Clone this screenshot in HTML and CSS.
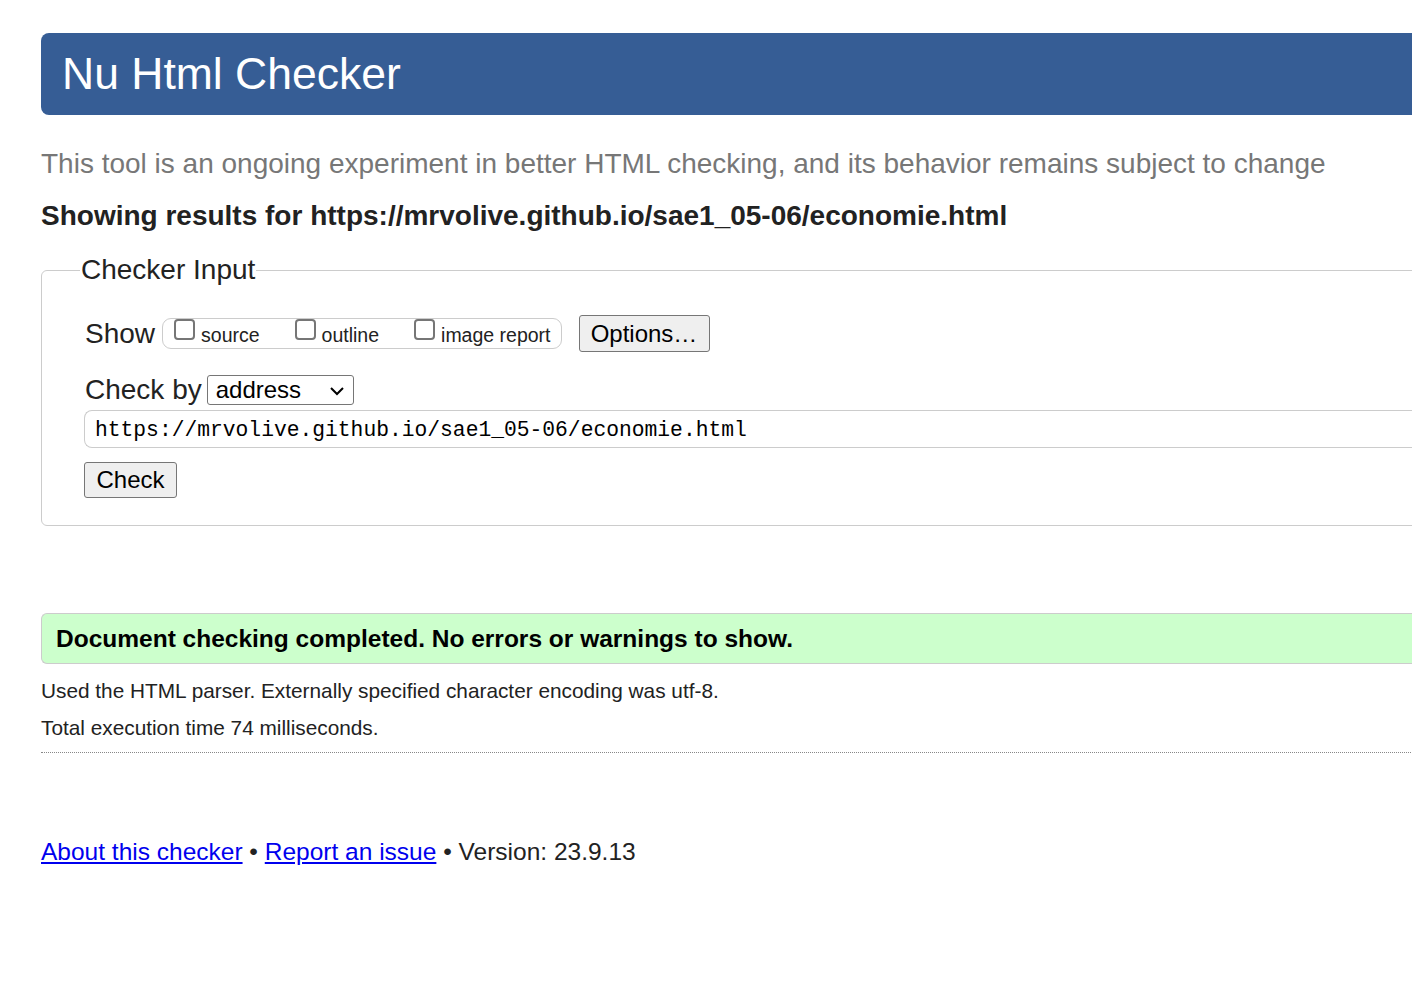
FILE: index.html
```html
<!DOCTYPE html>
<html lang="en">
<head>
<meta charset="utf-8">
<title>Nu Html Checker</title>
<link rel="stylesheet" href="styles.css">
</head>
<body>
<div class="page">
  <h1 class="banner">Nu Html Checker</h1>
  <p class="tagline">This tool is an ongoing experiment in better HTML checking, and its behavior remains subject to change</p>
  <p class="showing">Showing results for https://mrvolive.github.io/sae1_05-06/economie.html</p>
  <fieldset class="input-box">
    <legend class="legend">Checker Input</legend>
    <div class="row show-row">
      <span class="row-label">Show</span>
      <span class="opts">
        <label class="opt"><input type="checkbox" class="cb"><span>source</span></label>
        <label class="opt"><input type="checkbox" class="cb"><span>outline</span></label>
        <label class="opt"><input type="checkbox" class="cb"><span>image report</span></label>
      </span>
      <button class="btn options-btn" type="button">Options…</button>
    </div>
    <div class="row checkby-row">
      <span class="row-label">Check by</span>
      <span class="select">address<svg class="chev" width="16" height="10" viewBox="0 0 16 10"><path d="M2 2 L8 8 L14 2" fill="none" stroke="#000" stroke-width="2"/></svg></span>
    </div>
    <div class="url">https://mrvolive.github.io/sae1_05-06/economie.html</div>
    <button class="btn check-btn" type="button">Check</button>
  </fieldset>
  <div class="success">Document checking completed. No errors or warnings to show.</div>
  <p class="info first">Used the HTML parser. Externally specified character encoding was utf-8.</p>
  <p class="info">Total execution time 74 milliseconds.</p>
  <hr class="dots">
  <p class="footer"><a href="#">About this checker</a> • <a href="#">Report an issue</a> • Version: 23.9.13</p>
</div>
</body>
</html>
```

FILE: styles.css
```css
html, body {
  margin: 0;
  padding: 0;
  background: #fff;
  overflow: hidden;
}
body {
  font-family: "Liberation Sans", Arial, sans-serif;
  color: #222;
}
.page {
  width: 1560px;
  padding: 33px 0 0 41px;
}
.banner {
  margin: 0;
  height: 82px;
  line-height: 82px;
  background: #365d95;
  color: #fff;
  font-weight: normal;
  font-size: 44.5px;
  padding-left: 21px;
  border-radius: 8px 0 0 8px;
}
.tagline {
  margin: 31px 0 0;
  font-size: 28px;
  line-height: 36px;
  color: #777;
}
.showing {
  margin: 17px 0 0;
  font-size: 28px;
  line-height: 34px;
  font-weight: bold;
  color: #222;
}
.input-box {
  margin: 22px 0 0;
  border: 1px solid #ccc;
  border-radius: 6px;
  padding: 30px 0 27px 43px;
}
.legend {
  font-size: 28px;
  line-height: 30px;
  padding: 0 1px;
  margin-left: -5px;
  color: #222;
}
.row {
  display: flex;
  align-items: center;
}
.row-label {
  font-size: 28px;
  line-height: 32px;
}
.show-row {
  height: 37px;
}
.opts {
  display: flex;
  align-items: flex-start;
  margin-left: 7px;
  height: 29px;
  border: 1px solid #ccc;
  border-radius: 9px;
  padding: 0 10px 0 11px;
  gap: 35px;
  margin-top: 0;
}
.opt {
  display: flex;
  align-items: flex-start;
  font-size: 19.5px;
  color: #222;
}
.opt span {
  margin-top: 5px;
  margin-left: 6px;
}
.cb {
  appearance: none;
  -webkit-appearance: none;
  width: 21px;
  height: 21px;
  margin: 0;
  border: 2px solid #767676;
  border-radius: 4px;
  background: #fff;
}
.btn {
  font-family: "Liberation Sans", Arial, sans-serif;
  background: #efefef;
  border: 1px solid #767676;
  border-radius: 3px;
  color: #000;
  padding: 0;
}
.options-btn {
  margin-left: 17px;
  width: 131px;
  height: 37px;
  font-size: 24px;
}
.checkby-row {
  margin-top: 22px;
}
.select {
  display: flex;
  align-items: center;
  justify-content: space-between;
  box-sizing: border-box;
  margin-left: 5px;
  width: 147px;
  height: 30px;
  border: 1px solid #767676;
  border-radius: 3px;
  padding: 0 8px 0 8px;
  font-size: 24px;
  color: #000;
}
.chev {
  margin-top: 2px;
}
.url {
  box-sizing: border-box;
  margin-top: 4px;
  height: 38px;
  line-height: 39px;
  border: 1px solid #ccc;
  border-right: none;
  border-radius: 8px 0 0 8px;
  padding-left: 10px;
  margin-left: -1px;
  font-family: "Liberation Mono", "DejaVu Sans Mono", monospace;
  font-size: 21.3px;
  color: #000;
}
.check-btn {
  display: block;
  margin-top: 14px;
  margin-left: -1px;
  width: 93px;
  height: 36px;
  font-size: 24px;
}
.success {
  margin-top: 87px;
  box-sizing: border-box;
  height: 51px;
  line-height: 49px;
  background: #ccffcc;
  border: 1px solid #ccc;
  border-right: none;
  border-radius: 6px 0 0 6px;
  padding-left: 14px;
  font-size: 24.5px;
  font-weight: bold;
  color: #000;
}
.info {
  margin: 0;
  font-size: 20.8px;
  line-height: 37px;
  color: #222;
}
.info.first {
  margin-top: 8px;
}
.dots {
  margin: 6px 0 0;
  border: none;
  border-top: 1px dotted #888;
  height: 0;
}
.footer {
  margin: 81px 0 0;
  font-size: 24.5px;
  line-height: 36px;
  color: #222;
}
.footer a {
  color: #0000ee;
}
```
